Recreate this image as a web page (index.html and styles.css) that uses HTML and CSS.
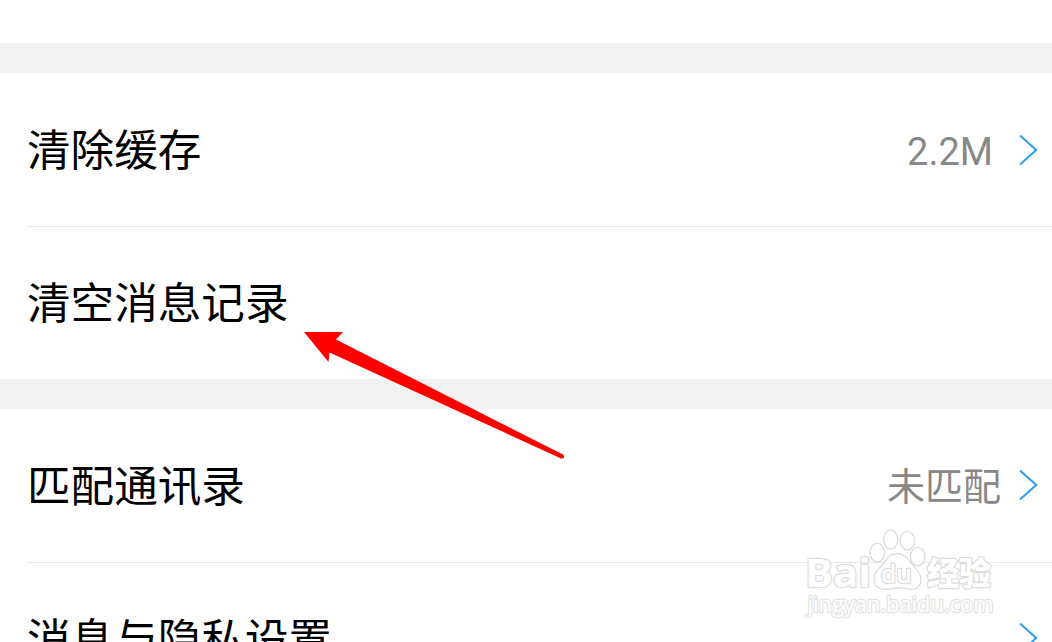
FILE: index.html
```html
<!DOCTYPE html>
<html lang="zh-CN">
<head>
  <meta charset="UTF-8">
  <meta name="viewport" content="width=device-width, initial-scale=1.0">
  <title>设置</title>
  <link rel="stylesheet" href="styles.css">
</head>
<body>

  <div class="settings">
    <div class="group">
      <div class="row">
        <span class="label">清除缓存</span>
        <span class="value value-size">2.2M</span>
        <svg class="chevron" viewBox="0 0 20 32"><path d="M1 1.5 L17.2 16 L1 30.5"/></svg>
      </div>
      <div class="row">
        <span class="label">清空消息记录</span>
      </div>
    </div>

    <div class="group">
      <div class="row">
        <span class="label">匹配通讯录</span>
        <span class="value">未匹配</span>
        <svg class="chevron" viewBox="0 0 20 32"><path d="M1 1.5 L17.2 16 L1 30.5"/></svg>
      </div>
      <div class="row">
        <span class="label">消息与隐私设置</span>
        <svg class="chevron" viewBox="0 0 20 32"><path d="M1 1.5 L17.2 16 L1 30.5"/></svg>
      </div>
    </div>
  </div>

  <!-- Arrow pointing at the row -->
  <svg class="arrow" viewBox="0 0 262 130">
    <path d="M0 0 H39 L32 7.5 L259 122.5 Q261 124.5 259.5 126 Q258 127 256 126 L25.5 20.5 L24.5 30 Z"/>
  </svg>

  <!-- Watermark -->
  <svg class="watermark" viewBox="0 0 200 96">
    <text class="wm-bai" x="5" y="61" textLength="66" lengthAdjust="spacingAndGlyphs">Bai</text>
    <ellipse cx="77.3" cy="26.7" rx="7.3" ry="9.3"/>
    <ellipse cx="90.7" cy="13.5" rx="7" ry="9.6"/>
    <ellipse cx="107.3" cy="14.7" rx="7.3" ry="9.3"/>
    <ellipse cx="117.7" cy="30.5" rx="7.3" ry="9.2"/>
    <path d="M97 27.5 C104 27.5 108 33 112 38 C116 43 121 47 121 53 C121 60 117 63.5 111 63.3 C105 62.5 102 61.5 97 62 C91 62.5 88 64 82 63 C76 62 74 58 74 52 C74 46 79 43 83 38 C87 33 90 27.5 97 27.5 Z"/>
    <text class="wm-du" x="81" y="57" textLength="31" lengthAdjust="spacingAndGlyphs">du</text>
    <text class="wm-exp" x="127" y="59" textLength="64" lengthAdjust="spacingAndGlyphs">经验</text>
    <text class="wm-url" x="7.5" y="86" textLength="186" lengthAdjust="spacingAndGlyphs">jingyan.baidu.com</text>
  </svg>

</body>
</html>
```

FILE: styles.css
```css
* {
  margin: 0;
  padding: 0;
  box-sizing: border-box;
}

body {
  background-color: #f2f2f2;
  font-family: Roboto, "Noto Sans CJK SC", sans-serif;
  height: 642px;
  overflow: hidden;
  position: relative;
}

.settings {
  display: flex;
  flex-direction: column;
  gap: 30px;
  height: 642px;
  overflow: hidden;
  border-top: 43px solid #fff;
  padding-top: 30px;
}

.group {
  flex-shrink: 0;
  background-color: #fff;
}

.row {
  display: flex;
  align-items: center;
  height: 153px;
  margin-left: 27px;
  padding-right: 13px;
}

.row + .row {
  border-top: 1px solid #e8e8e8;
}

.label {
  flex: 1;
  padding-top: 4px;
  font-size: 43.6px;
  line-height: 60px;
  color: #000;
}

.value {
  font-size: 38px;
  line-height: 54px;
  padding-top: 2px;
  color: #888;
  margin-right: 18px;
}

.value-size {
  padding-top: 4px;
  margin-right: 26px;
}

.chevron {
  width: 20px;
  height: 32px;
  fill: none;
  stroke: #2b9df4;
  stroke-width: 2;
}

.group:last-child .chevron {
  margin-bottom: 2px;
}

.arrow {
  position: absolute;
  left: 304px;
  top: 332px;
  width: 262px;
  height: 130px;
  fill: #f00;
}

.watermark {
  position: absolute;
  left: 800px;
  top: 526px;
  width: 200px;
  height: 96px;
  fill: #fff;
  stroke: #dcdcdc;
  stroke-width: 1.3;
}

.watermark text {
  font-family: "Open Sans", "Noto Sans CJK SC", sans-serif;
  font-weight: bold;
  paint-order: stroke;
  stroke-width: 2.4;
  stroke-linejoin: round;
}

.watermark .wm-bai {
  font-size: 40px;
}

.watermark .wm-du {
  font-size: 25px;
  font-weight: 600;
}

.watermark .wm-exp {
  font-size: 31.5px;
  font-weight: 900;
}

.watermark .wm-url {
  font-size: 21px;
  font-weight: 500;
  stroke: #e4e4e4;
}
```
